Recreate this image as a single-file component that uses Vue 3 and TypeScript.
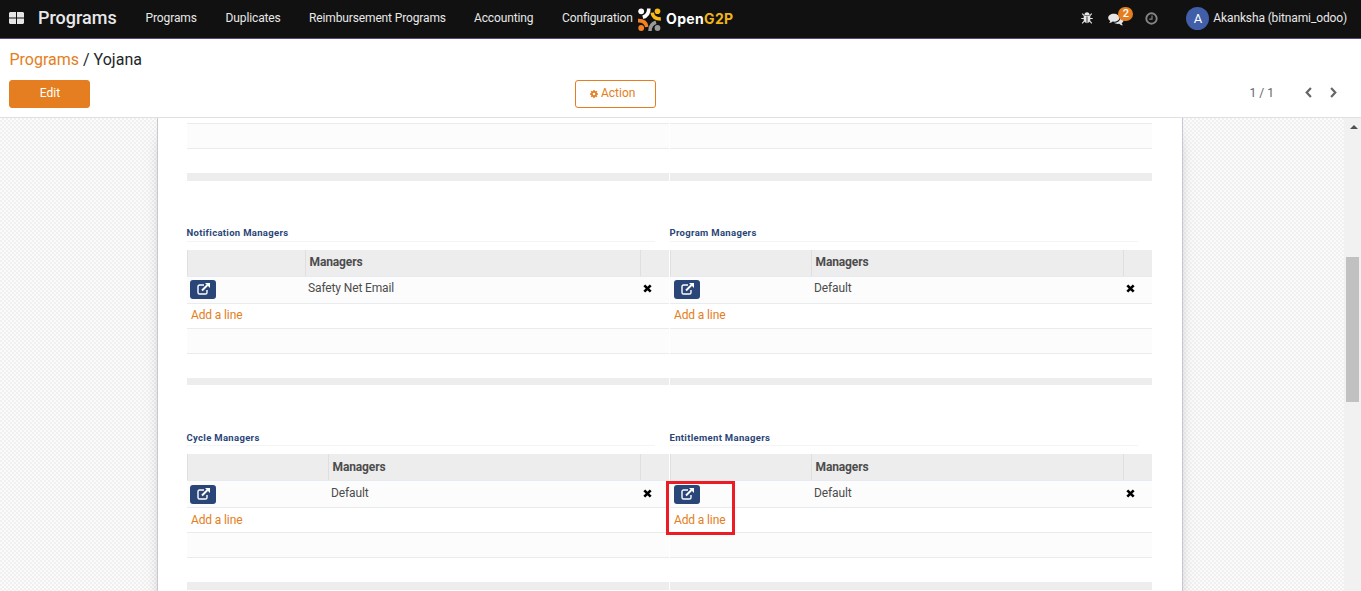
<script setup lang="ts">
interface Manager { title: string; value: string; firstCol: number; marked?: boolean }
interface Group { cls: string; items: Manager[] }

const menu = [
  { label: 'Programs', cls: 'm1' },
  { label: 'Duplicates', cls: 'm2' },
  { label: 'Reimbursement Programs', cls: 'm3' },
  { label: 'Accounting', cls: 'm4' },
  { label: 'Configuration', cls: 'm5' },
]
const groups: Group[] = [
  { cls: 'upper', items: [
    { title: 'Notification Managers', value: 'Safety Net Email', firstCol: 118 },
    { title: 'Program Managers', value: 'Default', firstCol: 141 },
  ] },
  { cls: 'lower', items: [
    { title: 'Cycle Managers', value: 'Default', firstCol: 141 },
    { title: 'Entitlement Managers', value: 'Default', firstCol: 141, marked: true },
  ] },
]
</script>

<template>
  <div class="app">
    <header class="navbar">
      <svg class="apps" width="15" height="12" viewBox="0 0 15 12"><path fill="#e6e6e6" d="M1 0h6v5.500H0V1zM8 0h6l1 1v4.500H8zM0 6.500h7V12H1l-1-1zM8 6.500h7V11l-1 1H8z" /></svg>
      <span class="brand">Programs</span>
      <nav class="menu"><a v-for="m in menu" :key="m.label" :class="m.cls">{{ m.label }}</a></nav>
      <svg class="mark" width="23" height="24" viewBox="0 0 23 24">
        <circle cx="3.2" cy="3.3" r="2.9" fill="#fff" />
        <circle cx="19.5" cy="3.3" r="2.8" fill="#fdb913" />
        <circle cx="3.2" cy="20" r="2.9" fill="#f58220" />
        <circle cx="19.5" cy="20" r="2.9" fill="#999" />
        <g fill="none" stroke-width="3.6">
          <path d="M10.8 .5Q11 7.5 4.8 9.2" stroke="#fff" />
          <path d="M22.8 11Q15 11 14.2 4.6" stroke="#fdb913" />
          <path d="M0 12.6Q8 12.4 8.8 19" stroke="#f58220" />
          <path d="M12 23Q12 16 18 14.2" stroke="#999" />
        </g>
      </svg>
      <span class="logo">Open<b>G2P</b></span>
      <div class="systray">
        <svg class="bug" width="12" height="12" viewBox="0 0 12 12"><path d="M3.4 3Q3.6.3 6 .3T8.6 3z" fill="#e6e6e6" /><path d="M2.7 3.5h6.6v4.8Q8.8 11 6.4 11.2V4.5h-.8v6.7Q3.2 11 2.7 8.300z" fill="#e6e6e6" /><path d="M1.2 1.6 3.2 3.700M10.8 1.600 8.800 3.700M.3 6.500h2.600M11.700 6.500H9.100M1.200 11.300l2.200-2.500M10.800 11.300 8.600 8.800" stroke="#e6e6e6" stroke-width="1.100" /></svg>
        <span class="chat">
          <svg width="16" height="13" viewBox="0 0 16 13"><path fill="#e6e6e6" d="M12.200 3.500c4 1.200 4.500 5 1.500 6.600.1 1 .7 1.500 1.300 2.200-1.800.2-3-.6-3.700-1.500-2.300.3-4-.2-5.300-1.100 4 0 7-2.300 6.200-6.200z" /><path fill="#e6e6e6" d="M5.800.7C2.600.7.2 2.500.2 4.800c0 1.400.8 2.500 2 3.200 0 .8-.6 1.400-1.100 1.900 1.500.1 2.700-.5 3.600-1.300 3.900.4 6.800-1.400 6.800-3.900C11.500 2.500 9 .7 5.800.7z" /></svg>
          <span class="badge">2</span>
        </span>
        <svg class="clock" width="13" height="13" viewBox="0 0 13 13" fill="none" stroke="#858585"><circle cx="6.500" cy="6.500" r="5.200" stroke-width="1.900" /><path d="M7 3.500v3.600H4.200" stroke-width="1.200" /></svg>
        <span class="avatar">A</span>
        <span class="user">Akanksha (bitnami_odoo)</span>
      </div>
    </header>

    <section class="panel">
      <div class="crumbs"><a>Programs</a> / Yojana</div>
      <div class="tools">
        <button class="edit">Edit</button>
        <button class="action">
          <svg width="8" height="8" viewBox="0 0 8 8" fill="none" stroke="#e47e20"><circle cx="4" cy="4" r="2.150" stroke-width="1.700" /><path d="M4 0v1.500M4 6.500V8M0 4h1.500M6.500 4H8M1.200 1.200l1 1M5.800 5.800l1 1M6.800 1.200l-1 1M1.200 6.800l1-1" stroke-width="1.500" /></svg>
          <span>Action</span>
        </button>
        <div class="pager">
          <span class="count">1 / 1</span>
          <svg width="7" height="11" viewBox="0 0 7 11"><path d="M5.900 1 1.700 5.500l4.200 4.500" /></svg>
          <svg width="7" height="11" viewBox="0 0 7 11"><path d="M1.100 1l4.200 4.500L1.100 10" /></svg>
        </div>
      </div>
    </section>

    <main class="content">
      <div class="canvas">
        <div class="sheet">
          <div class="group first">
            <div v-for="n in 2" :key="n" class="field">
              <div class="filler"></div>
              <div class="space"></div>
              <div class="foot"></div>
            </div>
          </div>
          <div v-for="g in groups" :key="g.cls" class="group" :class="g.cls">
            <div v-for="m in g.items" :key="m.title" class="field">
              <h4>{{ m.title }}</h4>
              <div class="row head" :style="{ gridTemplateColumns: m.firstCol - 1 + 'px 1fr 29px' }">
                <span></span><span class="label">Managers</span><span></span>
              </div>
              <div class="row data" :style="{ gridTemplateColumns: m.firstCol - 1 + 'px 1fr 29px' }">
                <span class="open"><svg width="13" height="12" viewBox="0 0 13 12" fill="none" stroke="#fff"><path d="M7 2H2.600Q1 2 1 3.600v5.800Q1 11 2.600 11h5.800Q10 11 10 9.400V7" stroke-width="1.400" /><path d="M5 7.500 10.500 2" stroke-width="1.900" /><path d="M8 0h5v5z" fill="#fff" stroke="none" /></svg></span>
                <span class="value">{{ m.value }}</span>
                <svg class="del" width="9" height="9" viewBox="0 0 9 9"><path d="M1.300 1.300l6.400 6.400M7.700 1.300 1.300 7.700" stroke="#000" stroke-width="2.600" /></svg>
              </div>
              <div class="add"><a>Add a line</a></div>
              <div class="filler"></div>
              <div class="space"></div>
              <div class="foot"></div>
              <div v-if="m.marked" class="highlight"></div>
            </div>
          </div>
        </div>
      </div>
      <aside class="scroll"><i class="up"></i><div class="thumb"></div></aside>
    </main>
  </div>
</template>

<style>
body { overflow: hidden; }
</style>
<style scoped>
* { box-sizing: border-box; }
.app { width: 1361px; height: 591px; display: flex; flex-direction: column; overflow: hidden; background: #fff; font: 12px/18px Roboto, "Liberation Sans", sans-serif; letter-spacing: -.13px; color: #4c4c4c; }
svg { display: block; flex: none; }
.navbar { flex: none; height: 39px; background: #111; border-bottom: 1px solid #5a4a80; display: flex; align-items: flex-start; color: #e8e8e8; white-space: nowrap; }
.apps { margin: 12px 0 0 9px; }
.brand { width: 107px; margin: 6px 0 0 14px; font-size: 18px; line-height: 24px; font-weight: 500; letter-spacing: 0; }
.menu { display: flex; width: 493px; padding: 9px 0 0 .6px; }
.menu a { flex: none; }
.m1 { width: 80px; } .m2 { width: 83.400px; } .m3 { width: 165px; } .m4 { width: 88px; }
.mark { margin-top: 8px; }
.logo { margin: 9px 0 0 5px; font: 700 14px/20px Inter, sans-serif; letter-spacing: .35px; color: #fff; width: 74px; }
.logo b { color: #f0b51c; font-weight: 700; }
.systray { margin-left: auto; display: flex; align-items: flex-start; padding-right: 14px; }
.bug { margin-top: 12px; }
.chat { position: relative; margin: 13px 0 0 15px; width: 24px; height: 13px; }
.badge { position: absolute; left: 10px; top: -6px; width: 15px; height: 14px; border-radius: 7px; background: #e47e20; color: #fff; font-size: 11px; line-height: 14px; text-align: center; font-weight: 500; }
.clock { margin: 12px 0 0 13px; }
.avatar { width: 23px; height: 23px; margin: 7px 0 0 28px; border-radius: 50%; background: #405fa8; color: #fff; text-align: center; font-size: 13px; line-height: 23px; }
.user { margin: 9px 0 0 4px; }
.panel { flex: none; height: 79px; border-bottom: 1px solid #dee0e2; }
.crumbs { padding: 10px 0 0 9.500px; height: 41px; font-size: 16px; line-height: 21px; letter-spacing: 0; color: #212529; }
.crumbs a, .add a { color: #e47e20; }
.tools { display: flex; padding-left: 9px; }
button { width: 81px; height: 28px; border: 1px solid #e47e20; border-radius: 3px; padding: 0 0 2px; font: 12px/18px Roboto, sans-serif; }
.edit { background: #e47e20; color: #fff; padding-left: 1px; }
.action { margin-left: 485px; background: #fff; color: #e47e20; display: flex; align-items: center; padding-left: 14px; gap: 3px; }
.action svg { margin-top: 2px; }
.pager { margin-left: auto; display: flex; align-items: center; height: 24px; padding-right: 24px; }
.count { margin: 1px 31px 0 0; color: #666; letter-spacing: 0; }
.pager svg { fill: none; stroke: #666; stroke-width: 2.200; }
.pager svg + svg { margin-left: 18px; }
.content { flex: 1; min-height: 0; display: flex; overflow: hidden; }
.canvas { flex: 1; overflow: hidden; display: flex; background: repeating-conic-gradient(#f0f0f0 0 25%, #fbfbfb 0 50%) 0 0 / 4px 4px; }
.sheet { flex: none; width: 1026px; height: 600px; margin-left: 157px; padding: 5px 30px 0 29px; background: #fff; border: solid #c8c8d3; border-width: 0 1px; box-shadow: 0 5px 20px -15px #000; }
.group { display: grid; grid-template-columns: 482px 482px; column-gap: 1px; }
.field { position: relative; }
.filler { height: 26px; background: #fcfcfc; border: solid #e9ecef; border-width: 1px 0; }
.space { height: 24px; }
.foot { height: 8px; background: #ededed; }
h4 { height: 69px; margin: 0 14px 0 -.5px; padding-top: 43px; font: 700 9.500px/18px Roboto, sans-serif; letter-spacing: .32px; color: #2a4577; background: linear-gradient(#f4f4f4, #f4f4f4) 0 60px / 100% 1px no-repeat; }
.row { display: grid; }
.head { height: 26px; background: #ededed; border-left: 1px solid #e0e0e0; font-weight: 700; }
.head span + span { border-left: 1px solid #dfdfdf; }
.label { padding: 3px 0 0 3.500px; }
.data { height: 27px; border-top: 1px solid #e6ebf1; background: #fcfcfc; padding-left: 1px; }
.open { width: 26px; height: 19px; margin: 3px 0 0 2px; border-radius: 3px; background: #2a4577; padding: 3px 0 0 7px; }
.field + .field .open { margin-left: 3px; }
.value { padding: 2px 0 0 3px; }
.del { margin: 7px 0 0 3px; }
.add { height: 25px; border-top: 1px solid #e9ecef; padding: 2px 0 0 4px; }
.upper .foot { height: 7px; }
.lower h4 { padding-top: 44px; }
.lower .label { padding-top: 4px; }
.lower .value { padding-top: 3px; }
.lower .open { margin-top: 4px; }
.lower .del { margin-top: 8px; }
.lower .add { padding-top: 3px; }
.highlight { position: absolute; left: -4px; top: 96px; width: 69px; height: 54px; border: 3px solid #ed1c24; }
.scroll { flex: none; width: 17px; background: #f1f1f1; padding: 7px 2px 0; }
.up { display: block; width: 0; height: 0; margin: 0 auto 0 4px; border: solid transparent; border-width: 0 4px 4px; border-bottom-color: #505050; }
.thumb { height: 145px; margin-top: 128px; background: #c1c1c1; }
</style>
